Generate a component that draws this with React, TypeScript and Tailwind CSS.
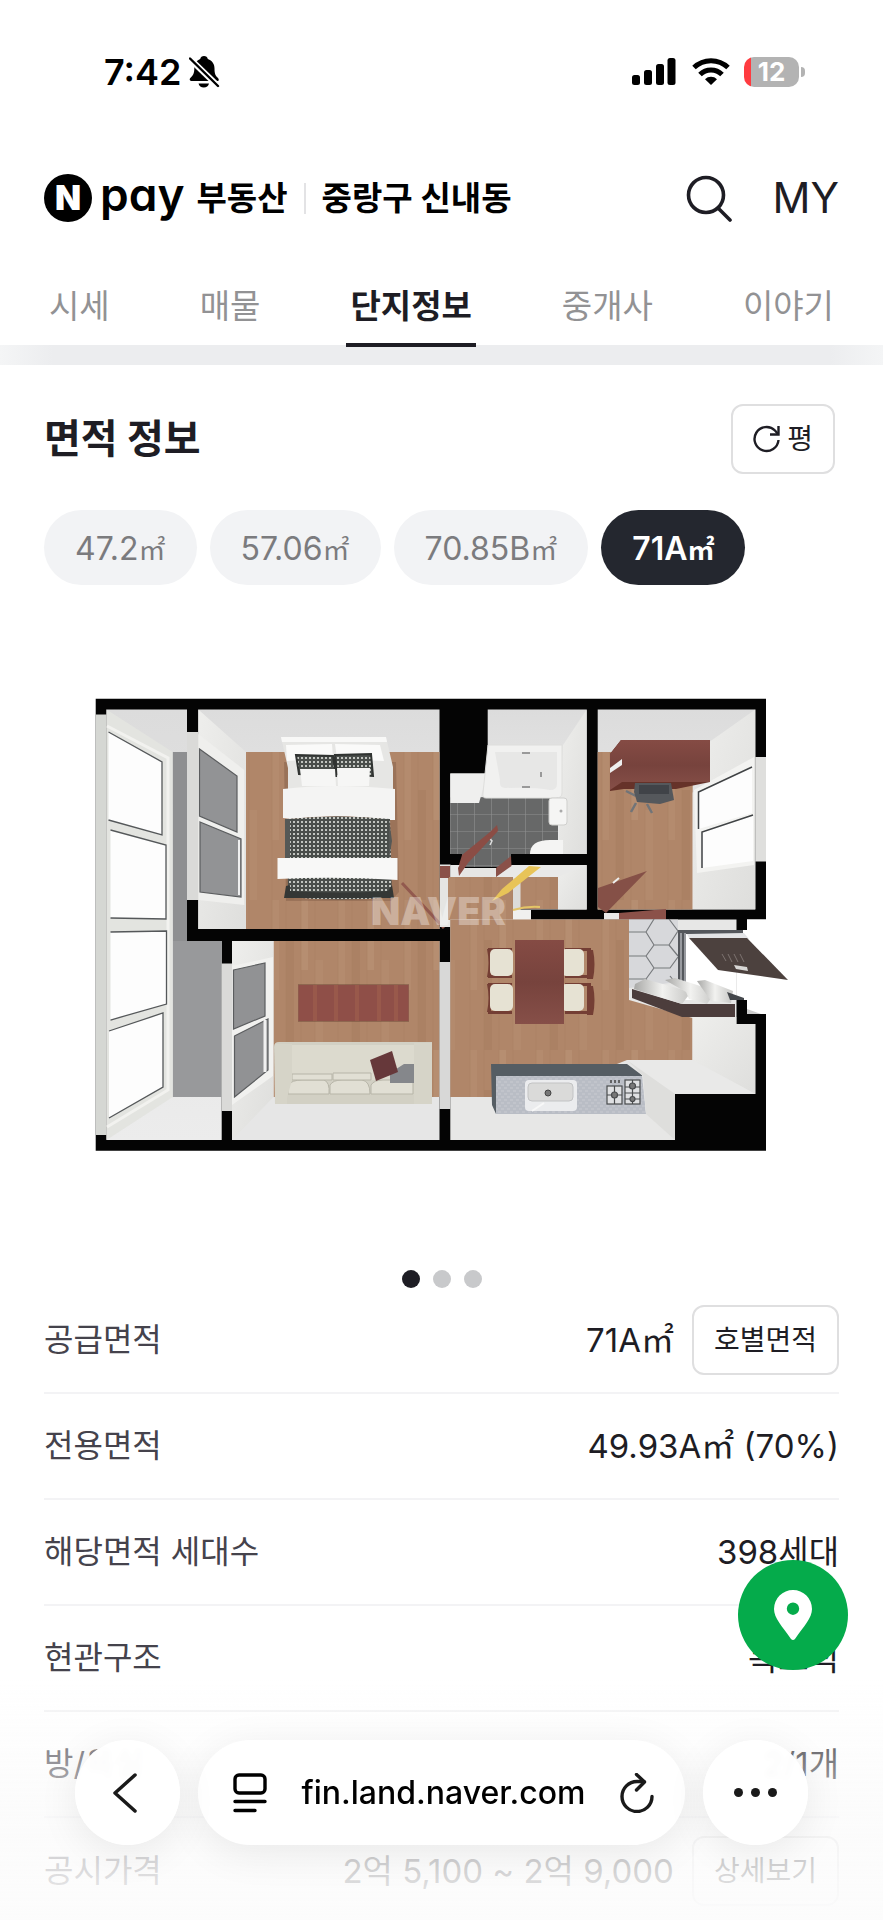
import React, { useState } from 'react';

const TABS = ['시세', '매물', '단지정보', '중개사', '이야기'];
const AREAS = ['47.2', '57.06', '70.85B', '71A'];

const ROWS = [
  { label: '공급면적', value: '71A㎡', action: '호별면적' },
  { label: '전용면적', value: '49.93A㎡ (70%)' },
  { label: '해당면적 세대수', value: '398세대' },
  { label: '현관구조', value: '복도식' },
  { label: '방/욕실', value: '2/1개' },
  { label: '공시가격', value: '2억 5,100 ~ 2억 9,000', action: '상세보기' },
];

function StatusBar() {
  return (
    <div className="flex h-36 items-center justify-between pr-[78px] pl-[104px]">
      <div className="flex items-center gap-2">
        <span className="text-[36px] leading-[44px] font-semibold text-black">7:42</span>
        <svg className="h-8 w-[31px]" viewBox="0 0 31 32">
          <path d="M15 0c2 0 3.500 1.300 3.800 3 4.500 1.600 6.700 5 6.700 9.500 0 5 .8 7 3.500 9.500 1 1 1.300 3-.5 3H3C.5 25 .3 23 1.300 22c3-2.600 4-5 4-9.500C5.300 8 7.300 4.600 11.200 3c.3-1.700 1.800-3 3.800-3ZM9.500 27.500h10.500c-.6 2.700-2.500 4-5.200 4s-4.700-1.300-5.300-4Z" />
          <path d="m1 3 28 27" stroke="#fff" strokeWidth="6" />
          <path d="m1 2.500 28 27.500" stroke="#000" strokeWidth="2.400" strokeLinecap="round" />
        </svg>
      </div>
      <div className="flex items-center">
        <svg className="mr-4 h-7 w-11" viewBox="0 0 44 28">
          <rect x="0" y="17" width="8" height="10" rx="2.500" />
          <rect x="12" y="12" width="8" height="15" rx="2.500" />
          <rect x="24" y="6" width="8" height="21" rx="2.500" />
          <rect x="35.500" y="0" width="8" height="27" rx="2.500" />
        </svg>
        <svg className="mr-3.5 h-7 w-[38px]" viewBox="0 0 38 28">
          <path d="M2 9.500a24.500 24.500 0 0 1 34 0" fill="none" stroke="#000" strokeWidth="5" />
          <path d="M8 16.500a15.500 15.500 0 0 1 22 0" fill="none" stroke="#000" strokeWidth="5" />
          <path d="M13 21.200a8.500 8.500 0 0 1 12 0L19 27Z" />
        </svg>
        <div className="flex h-[30px] w-[55px] items-center justify-center rounded-[10px] bg-[linear-gradient(90deg,#ff3b40_7px,#b3b3b3_7px)] text-[26px] leading-[30px] font-bold text-white">
          12
        </div>
        <div className="ml-0.5 h-2.5 w-1 rounded-r-full bg-[#b3b3b3]" />
      </div>
    </div>
  );
}

function Header() {
  return (
    <header className="flex h-[108px] items-center pr-11 pl-11">
      <a href="#home" className="flex items-center text-black">
        <span className="flex size-12 items-center justify-center rounded-full bg-black text-[34px] leading-[48px] font-black text-white">
          N
        </span>
        <span className="mr-3 ml-2 pb-2 text-[46px] leading-[48px] font-semibold [font-feature-settings:'cv11']">
          pay
        </span>
        <span className="text-[33px] leading-[48px] font-bold">부동산</span>
      </a>
      <span className="mx-4 h-[31px] w-0.5 bg-[#e3e3e5]" />
      <a href="#region" className="text-[33px] leading-[48px] font-bold text-black">
        중랑구 신내동
      </a>
      <button type="button" aria-label="검색" className="mr-10 ml-auto">
        <svg className="size-12" viewBox="0 0 48 48" fill="none" stroke="#1e1d24" strokeWidth="3.600" strokeLinecap="round">
          <circle cx="21" cy="21" r="17.500" />
          <path d="m34 35 11 11" />
        </svg>
      </button>
      <a href="#my" className="text-[42px] leading-[48px] text-[#1e1d24]">
        MY
      </a>
    </header>
  );
}

function FloorPlan() {
  return (
    <svg className="w-full" viewBox="95 698 694 454" role="img" aria-label="평면도">
      <defs>
        <pattern id="wood" width="66" height="150" patternUnits="userSpaceOnUse">
          <rect width="66" height="150" fill="#b08669" />
          <rect x="8" width="7" height="90" fill="#b48b6e" />
          <rect x="22" y="40" width="8" height="110" fill="#ab8164" />
          <rect x="37" width="7" height="70" fill="#b68e71" />
          <rect x="51" y="60" width="8" height="90" fill="#b38a6d" />
          <path d="M8 0v150M22 0v150M37 0v150M51 0v150" stroke="#a87e61" strokeWidth=".6" />
        </pattern>
        <pattern id="check" width="4" height="4" patternUnits="userSpaceOnUse">
          <rect width="4" height="4" fill="#4a4e4b" />
          <rect x="1" y="1" width="2" height="2" fill="#c2c5c0" />
        </pattern>
        <pattern id="tile" x="457" y="797" width="17" height="17" patternUnits="userSpaceOnUse">
          <rect width="17" height="17" fill="#676868" />
          <path d="M0 0h17M0 0v17" stroke="#8f9090" strokeWidth="1.200" />
        </pattern>
        <pattern id="granite" width="6" height="6" patternUnits="userSpaceOnUse">
          <rect width="6" height="6" fill="#b9bdc5" />
          <path d="M0 2h3M3 5h3" stroke="#c9ccd2" />
        </pattern>
        <linearGradient id="wallTop" x1="0" x2="0" y1="0" y2="1">
          <stop offset="0" stopColor="#dcdcdc" />
          <stop offset="1" stopColor="#ececec" />
        </linearGradient>
        <linearGradient id="wallSide" x1="0" x2="1" y1="0" y2="1">
          <stop offset="0" stopColor="#eeeeec" />
          <stop offset="1" stopColor="#dededc" />
        </linearGradient>
        <linearGradient id="mahogany" x1="0" x2="0" y1="0" y2="1">
          <stop offset="0" stopColor="#854b44" />
          <stop offset=".5" stopColor="#77433d" />
          <stop offset="1" stopColor="#864f48" />
        </linearGradient>
        <linearGradient id="leaf" x1="0" x2="1">
          <stop offset="0" stopColor="#a8a8a6" />
          <stop offset=".5" stopColor="#f2f2f0" />
          <stop offset="1" stopColor="#c5c5c3" />
        </linearGradient>
      </defs>

      {/* walls */}
      <path d="M95.700 698.700H766V919.300H747V930H736.700V1000H747V1014H766V1150.700H95.700Z" fill="#040404" />
      <path d="M95.700 714.600h10.800V1135H95.700Z" fill="#d5d7d3" />

      {/* balcony */}
      <path d="M106.500 709.500H187V941h34.700v199H106.500Z" fill="url(#wallTop)" />
      <path d="M172.700 752H187v189h34.700v156h-49Z" fill="#98999b" />
      <path d="M172.700 752H187v189h-14Z" fill="#8e8f91" />
      <path d="M106.500 709.500 172.700 752v345l-66.200 43Z" fill="#e3e4e0" />
      <path d="m107 726 61 32v332l-61 37" fill="none" stroke="#f2f2ef" strokeWidth="3" />
      <g fill="#fdfdfd">
        <path d="m108.500 732 53.500 30v73l-53.500-15Z" />
        <path d="m110.500 830 55.500 15v74l-55.500-1Z" />
        <path d="m110.500 932 56-1v73l-56 16Z" />
        <path d="m109 1031 54-18v74l-54 31Z" />
      </g>
      <path
        d="m108.500 732 53.500 30v73l-53.500-15M110.500 830l55.500 15v74l-55.500-1M110.500 932l56-1v73l-56 16M109 1031l54-18v74l-54 31"
        fill="none"
        stroke="#55585a"
        strokeWidth="1.300"
      />
      <path d="M187 732h11.300v168H187ZM221.700 963.500H232V1111h-10.300Z" fill="#dadad8" />

      {/* bedroom */}
      <path d="M198.300 709.500h241.200V929H198.300Z" fill="url(#wallTop)" />
      <path d="M246 752h193.500v177H246Z" fill="url(#wood)" />
      <path d="m198.300 709.500 47.700 42.500v177h-47.700Z" fill="url(#wallSide)" />
      <path d="m198.300 734 46 36v135l-46-5Z" fill="#efefed" />
      <g fill="#929395" stroke="#5b5d5f" strokeWidth="1.200">
        <path d="m199.500 749 37.500 27v56l-37.500-16Z" />
        <path d="m200 822 41 17v58l-41-5Z" />
      </g>
      <path d="M239 840v55" stroke="#f0f0f0" strokeWidth="2" />
      <path d="M284 762h112l3 130-8 9H286Z" fill="#6b4a35" opacity=".3" />
      <path d="M281 737h105l7 30v28H288v-27Z" fill="#e6e6e4" />
      <path d="M281 737h105l1 5H282Z" fill="#f8f8f7" />
      <path d="m286 745 46-1 1 14-46 3ZM335 744l45 1 4 16-47-2Z" fill="#fafaf9" />
      <path d="m296 755 37 1 3 20-37-2ZM335 755l36-1 2 22-36-2Z" fill="url(#check)" stroke="#303331" strokeWidth="2" />
      <path d="M300 769h35l1 17h-34ZM337 768h33l-1 18h-31Z" fill="#f6f6f5" />
      <path d="M283 789q50-6 112 0v31h-5q-50-7-100-1l-7-1Z" fill="#f4f4f3" />
      <path d="M287 819q50-5 103 0l2 78q-50 5-104 0Z" fill="url(#check)" />
      <path d="M285 819h5v42h-5ZM389 819l3 22-3 18Z" fill="#555856" />
      <path d="m286 886 4-1v6q50 3 98 0l4-6 2 13H284Z" fill="#343735" />
      <path d="M277.500 858h120v22q-60-4-120-1Z" fill="#f8f8f7" />
      <path d="M402 883 444 928" stroke="#92594e" strokeWidth="3" />

      {/* living room */}
      <path d="M232 941h207.500v199H232Z" fill="#e6e6e6" />
      <path d="M273.500 941h166v156h-166Z" fill="url(#wood)" />
      <path d="M232 941h41.500v156L232 1140Z" fill="url(#wallSide)" />
      <path d="m232 966 41-9v119l-41 29Z" fill="#f1f1ef" />
      <g fill="#919294" stroke="#5b5d5f" strokeWidth="1.200">
        <path d="m233.500 970 31.500-7v53l-31.500 13Z" />
        <path d="m234.500 1036 33.500-17v51l-33.500 27Z" />
      </g>
      <path d="M265 1020v52" stroke="#f0f0f0" strokeWidth="3" />
      <path d="M298 984h111v38H298Z" fill="#5d392b" opacity=".4" />
      <path d="M298.500 985h110v36h-110Z" fill="#8f4f48" />
      <path d="M315 985v36M336 985v36M357 985v36M379 985v36M396 985v36" stroke="#99594b" strokeWidth="4" />
      <path d="M274 1047q0-5 5-5h153v62H275Z" fill="#d2d0c4" />
      <path d="M292 1045h122v35H292Z" fill="#dcdace" />
      <g fill="#e1dfd4" stroke="#b7b5a8" strokeWidth="1">
        <path d="M288 1085q4-5 14-5h22q6 2 5 14h-41ZM330 1085q3-5 12-5h20q8 1 8 14h-40ZM371 1085q3-5 12-5h30v14h-42Z" />
        <path d="M292 1074h40v6h-40ZM333 1073h38v7h-38Z" />
      </g>
      <path d="M275 1044h17v36l-5 18v6h-12ZM414 1043h18v61h-18Z" fill="#d6d4c8" />
      <path d="M390 1083v-10l14-9h10v19Z" fill="#85878b" />
      <path d="m370 1060 22-9 6 21-22 9Z" fill="#66383a" />

      {/* wall opening between living room and kitchen */}
      <path d="M439.500 962h10.800v147h-10.800Z" fill="#d8d8d7" />
      <path d="M440 864.500h10.500V927H440Z" fill="#e5e5e3" />
      <path d="M440 866h10v12h-10Z" fill="#8b5148" />

      {/* bathroom */}
      <path d="M487.700 709.500h99V854H450.300v-80.500h37.400Z" fill="url(#wallTop)" />
      <path d="M450.300 797H558v57h-47v13h-49v-13h-11.700Z" fill="url(#tile)" />
      <path d="m586.700 709.500-24 36-4 99v9.500h28Z" fill="url(#wallSide)" />
      <path d="M450.300 773.500h37L479 803h-28.700Z" fill="#efefee" />
      <path d="M488 745h74v48q0 5-6 5h-70q-4 0-3-5Z" fill="#f1f1f0" stroke="#dededc" />
      <path d="M495 752h62v32q0 6-7 6-15-3-45-2-6 0-5-8Z" fill="#e7e7e6" />
      <path d="M522 753h8M522 787h8M541 772v5" stroke="#999" strokeWidth="2" />
      <rect x="549" y="798" width="18" height="27" rx="3" fill="#f5f5f4" stroke="#cfcfcd" />
      <circle cx="561" cy="811" r="1.500" fill="#aaa" />
      <path d="M530 854q0-14 20-14h13v14Z" fill="#f4f4f3" />
      <path d="m497 825 1 5-30 32-9 14-1-8 4-13 28-23Z" fill="#8b4d45" />
      <path d="m489 838 3 3-2 4" fill="none" stroke="#ddd" strokeWidth="1.500" />

      {/* hallway and closet */}
      <path d="M450.300 865h12v12h33l16-12h75.400v44.500H513V919.500h-62.700Z" fill="#e9e9e8" />
      <path d="M448 877h65v43h-65Z" fill="url(#wood)" />
      <path d="M520 877h38v32h-38Z" fill="url(#wood)" />
      <path d="M513 878h7.500v41H513Z" fill="#dcdcda" />
      <path d="M513 910h18v10h-18Z" fill="#f0f0ef" />
      <path d="m558 877 28.700-12v44.500H558Z" fill="url(#wallSide)" />
      <path d="M462 868h34v9h-34Z" fill="#e6e6e4" />
      <path d="m497 829 1 2-30 32-9 13-1-8 4-8Z" fill="#8b4d45" />
      <path d="m511 856 .5 10L496 877v-9Z" fill="#8a5149" />
      <path d="M441 866h8v12h-8Z" fill="#8a5149" />
      <path d="m529 866 12 1-9 7-24 19-16 8 10-12Z" fill="#e8c458" />
      <path d="M513 910q14-4 27-3" fill="none" stroke="#e4c567" strokeWidth="2" />

      {/* study */}
      <path d="M597.700 709.500h157.600v200H597.700Z" fill="url(#wallTop)" />
      <path d="M597.700 752h95v157.500h-95Z" fill="url(#wood)" />
      <path d="m755.300 709.500-45.300 32v40l-17.300 11v116.800h62.600Z" fill="url(#wallSide)" />
      <path d="m694 790 60-33v108l-57 8Z" fill="#f3f3f1" />
      <g fill="#fdfdfd">
        <path d="m698.500 792 53.500-25v46l-53.500 16Z" />
        <path d="m702 832 51-17v46l-51 7Z" />
      </g>
      <path d="m752 767-53.500 25v37M753 815l-51 17v36" fill="none" stroke="#3f4244" strokeWidth="1.500" />
      <path d="M755.300 757H766v104.600h-10.700Z" fill="#dfdfdd" />
      <path d="m610 754 11-14h89v42l-34 7h-52l-14 2Z" fill="#663229" />
      <path d="M621 740h89v42h-88l-12 8v-36Z" fill="url(#mahogany)" />
      <path d="m610 768 12-9v6l-12 8Z" fill="#eee" />
      <path d="m626 791 10 5m0 7-5 9m16-8 5 9m-16-18h36" fill="none" stroke="#717478" strokeWidth="2.500" />
      <path d="M635 783h36l3 17-14 4-23-2-3-10Z" fill="#55585c" />
      <path d="M639 785h30v9h-30Z" fill="#404348" />
      <path d="m598 888 49-17-41 42-8-6Z" fill="#855047" />
      <path d="m613 883 6-5" stroke="#eee" strokeWidth="2" />
      <path d="M604 913h15v6.500h-15Z" fill="#e9e9e8" />
      <path d="m619 913 47-4v10.500h-47Z" fill="#8b5149" />

      {/* kitchen */}
      <path d="M450.300 919.500h286.400V1024h18.600v70H675v46H450.300Z" fill="#e7e7e6" />
      <path d="M450.300 919.500H629V1000l63.500 18v42H627l-10 4H494l2 33h-45.700Z" fill="url(#wood)" />
      <path d="M692.500 1017h44.200v7h18.600v70l-62.800-34Z" fill="url(#wallSide)" />
      <path d="M629 919.500h49V982l-49 6Z" fill="#d7d8db" />
      <path d="M629 932h17l8-13m-8 13 8 13h15l9-14m-9 14 9 11m-24-11-8 11h-17m17 0 8 12h16l8-11m-24 11-8 11h-17m17 0 6 9m26-2-8-10M678 931l-9-12" fill="none" stroke="#777a7d" strokeWidth="1.200" />
      <path d="M684 930h52.700v70H684Z" fill="#fff" />
      <path d="M678 930h65v4h-57v49h-8Z" fill="#54575c" />
      <path d="M681 933v50M685 933v50" stroke="#aeb1b5" strokeWidth="1.500" />
      <path d="m687 934 57-1 5 6-60-1Z" fill="#e3e4e6" />
      <path d="m689 938 58 0 41 42-70-10Z" fill="#4c413e" />
      <path d="m722 954 4 7m2-7 4 8m2-8 4 8m2-8 4 8" stroke="#7d7370" />
      <path d="m734 965 13 2 1 4-12-2Z" fill="#d8d7d5" />
      <path d="m632 989 50 15h53v13h-53l-50-19Z" fill="#4c3d3c" />
      <path d="m635 984 10-5 46 13-9 12-48-15Z" fill="url(#leaf)" />
      <path d="m665 980 10-2 41 13-9 13-18-5-3-7Z" fill="url(#leaf)" />
      <path d="m697 981 8-1 28 11-2 12-20-2Z" fill="url(#leaf)" />
      <path d="m727 992 17 6v2h-14Z" fill="#44474b" />

      <g fill="#743e34">
        <path d="M487 949h4v28h-4q3-14 0-28ZM487 984h4v28h-4q3-14 0-28ZM587 950h6q3 14 0 29h-6ZM587 986h6q3 14 0 29h-6Z" />
        <path d="M488 948h24v3h-24ZM488 975h24v3h-24ZM488 983h24v3h-24ZM488 1011h24v3h-24ZM565 948h26v3h-26ZM565 975h26v3h-26ZM565 983h26v3h-26ZM565 1011h26v3h-26Z" />
      </g>
      <g fill="#e6e2d3">
        <rect x="490" y="949" width="23" height="27" rx="5" />
        <rect x="490" y="984" width="23" height="27" rx="5" />
        <rect x="561" y="949" width="23" height="27" rx="5" />
        <rect x="561" y="984" width="23" height="27" rx="5" />
      </g>
      <path d="M515 940h49v84h-49Z" fill="url(#mahogany)" />

      <path d="M491 1064h136l16 12H496v38l-4-9Z" fill="#555d63" />
      <path d="M496 1076h147l3 38H496Z" fill="url(#granite)" />
      <rect x="525" y="1080" width="52" height="31" rx="4" fill="#ebecee" />
      <rect x="528" y="1083" width="45" height="18" rx="4" fill="#dadad9" stroke="#c2c3c4" />
      <circle cx="548" cy="1093" r="3" fill="#777" stroke="#444" />
      <path d="m532 1111 12-8" stroke="#f8f8f8" strokeWidth="2" />
      <g fill="#dfe0e2" stroke="#4a4c4e" strokeWidth="1.200">
        <rect x="607" y="1086" width="15" height="18" />
        <rect x="625" y="1080" width="15" height="24" />
        <path d="M607 1095h15M614.500 1086v18M625 1087h15M625 1099h15M632.500 1080v24M625 1093h15" />
        <circle cx="614.500" cy="1095" r="3" fill="#777" />
        <circle cx="632.500" cy="1086" r="3" fill="#777" />
        <circle cx="632.500" cy="1099" r="2.500" fill="#777" />
      </g>
      <path d="M611 1080v3M615 1080v3M619 1080v3" stroke="#444" strokeWidth="1.500" />
      <path d="m627 1060 65.500 0 62.800 34H675v46l-29-26-4-39Z" fill="#e9e9e8" />
      <path d="m646 1114-3-38-16-16 14 10 34 24v46Z" fill="#dededc" />
      <path d="M736.700 1000H747v14h19v10h-29.300Z" fill="#040404" />
      <path d="m747 1009 14 5h-14Z" fill="#ccc" />
      <path d="M736.700 919H747v11h-10.300Z" fill="#040404" />

      <text x="371" y="925" fill="#fff" fillOpacity=".35" className="font-['Inter'] text-[38px] font-black">
        NAVER
      </text>
    </svg>
  );
}

function BrowserBar() {
  return (
    <>
      <div className="pointer-events-none fixed inset-x-0 bottom-0 h-60 bg-linear-to-t from-[#fcfcfc]/95 via-[#fafafa]/65 to-transparent" />
      <nav className="fixed inset-x-0 bottom-[75px] flex gap-[18px] px-[75px] text-black">
        <button
          type="button"
          aria-label="뒤로"
          className="flex size-[105px] items-center justify-center rounded-full bg-white/95 pr-1.5 shadow-[0_8px_40px_rgba(0,0,0,0.08)] backdrop-blur-[3px]"
        >
          <svg className="h-10 w-6" viewBox="0 0 24 40" fill="none" stroke="#1a1a1a" strokeWidth="3.500" strokeLinecap="round" strokeLinejoin="round">
            <path d="M22 2 2 20l20 18" />
          </svg>
        </button>
        <div className="flex h-[105px] flex-1 items-center justify-between rounded-full bg-white pr-[31px] pl-[35px] shadow-[0_8px_40px_rgba(0,0,0,0.08)]">
          <button type="button" aria-label="페이지 메뉴">
            <svg className="h-10 w-[34px]" viewBox="0 0 34 40" fill="none" stroke="#000" strokeWidth="3.400" strokeLinecap="round">
              <rect x="2" y="2" width="30" height="18" rx="4" />
              <path d="M2 28.500h30M2 37.500h20" />
            </svg>
          </button>
          <span className="text-[32px] leading-[44px] font-medium">fin.land.naver.com</span>
          <button type="button" aria-label="새로고침">
            <svg className="h-10 w-[34px]" viewBox="0 0 34 40" fill="none" stroke="#1a1a1a" strokeWidth="3.400" strokeLinecap="round" strokeLinejoin="round">
              <path d="M32 23.500A15 15 0 1 1 17 8.500h7" />
              <path d="m16.500 1.500 8 7.500-8 8" />
            </svg>
          </button>
        </div>
        <button
          type="button"
          aria-label="더보기"
          className="flex size-[105px] items-center justify-center gap-2 rounded-full bg-white/95 shadow-[0_8px_40px_rgba(0,0,0,0.08)] backdrop-blur-[3px]"
        >
          <span className="size-[9px] rounded-full bg-[#1a1a1a]" />
          <span className="size-[9px] rounded-full bg-[#1a1a1a]" />
          <span className="size-[9px] rounded-full bg-[#1a1a1a]" />
        </button>
      </nav>
    </>
  );
}

export default function App() {
  const [tab, setTab] = useState('단지정보');
  const [area, setArea] = useState('71A');

  return (
    <div className="h-screen overflow-y-auto bg-white font-['Inter','Noto_Sans_CJK_KR',sans-serif] text-[#1e1d24] [scrollbar-width:none]">
      <StatusBar />
      <Header />

      <nav className="flex h-[93px] justify-between px-[45px]">
        {TABS.map((name) => (
          <button
            key={name}
            type="button"
            onClick={() => setTab(name)}
            className={`relative px-1 pt-3.5 text-[33px] leading-[48px] ${
              name === tab ? 'font-bold text-[#1e1d24]' : 'text-[#929294]'
            }`}
          >
            {name}
            {name === tab && <span className="absolute inset-x-0 -bottom-0.5 h-1 bg-[#1e1d24]" />}
          </button>
        ))}
      </nav>
      <div className="h-5 bg-[linear-gradient(90deg,#f4f5f6,#ecedef_6%,#ecedef_94%,#f4f5f6)]" />

      <main>
        <section className="px-11">
          <div className="flex items-center justify-between pt-[39px] pr-1">
            <h2 className="text-[40px] leading-[56px] font-bold">면적 정보</h2>
            <button
              type="button"
              className="flex h-[70px] items-center gap-1.5 rounded-xl border-2 border-[#dfdfe0] px-5 text-[28px] leading-10"
            >
              <svg className="size-7" viewBox="0 0 28 28" fill="none" stroke="#1e1d24" strokeWidth="2.400">
                <path d="M25.500 15A12 12 0 1 1 22 5.500L25 9" />
                <path d="M25.500 1v8.500H17" />
              </svg>
              평
            </button>
          </div>

          <div className="mt-9 flex gap-[13px]">
            {AREAS.map((name) => (
              <button
                key={name}
                type="button"
                onClick={() => setArea(name)}
                className={`h-[75px] rounded-full px-[31px] pt-1 text-[32px] leading-[44px] ${
                  name === area ? 'bg-[#24272f] font-semibold text-white' : 'bg-[#f2f3f5] text-[#7b7b7e]'
                }`}
              >
                {name}
                <span className="text-[27px]">㎡</span>
              </button>
            ))}
          </div>

          <div className="pt-[113px] pr-[50px] pb-[118px] pl-[51px]">
            <FloorPlan />
          </div>

          <div className="flex justify-center gap-[13px]">
            <span className="size-[18px] rounded-full bg-[#1e1d24]" />
            <span className="size-[18px] rounded-full bg-[#c8c9cb]" />
            <span className="size-[18px] rounded-full bg-[#c8c9cb]" />
          </div>

          <dl>
            {ROWS.map((row) => (
              <div key={row.label} className="flex h-[106px] items-center justify-between border-b-2 border-[#f3f3f5] last:border-b-0">
                <dt className="text-[32px] leading-[44px] text-[#45434c]">{row.label}</dt>
                <dd className="flex items-center gap-[18px] text-[33px] leading-[44px]">
                  {row.value}
                  {row.action && (
                    <button
                      type="button"
                      className="h-[70px] rounded-xl border-2 border-[#dfdfe0] px-5 text-[28px] leading-10"
                    >
                      {row.action}
                    </button>
                  )}
                </dd>
              </div>
            ))}
          </dl>
        </section>
      </main>

      <button
        type="button"
        aria-label="지도"
        className="fixed right-[35px] bottom-[250px] flex size-[110px] items-center justify-center rounded-full bg-[#05ab4b]"
      >
        <svg className="h-[50px] w-[38px]" viewBox="0 0 38 50">
          <path
            d="M19 0a19 19 0 0 1 19 19c0 9-8 17-17 30q-2 2-4 0C8 36 0 28 0 19A19 19 0 0 1 19 0Zm0 12.500a6.200 6.200 0 1 0 0 12.400 6.200 6.200 0 0 0 0-12.400Z"
            fill="#fff"
            fillRule="evenodd"
          />
        </svg>
      </button>

      <BrowserBar />
    </div>
  );
}
